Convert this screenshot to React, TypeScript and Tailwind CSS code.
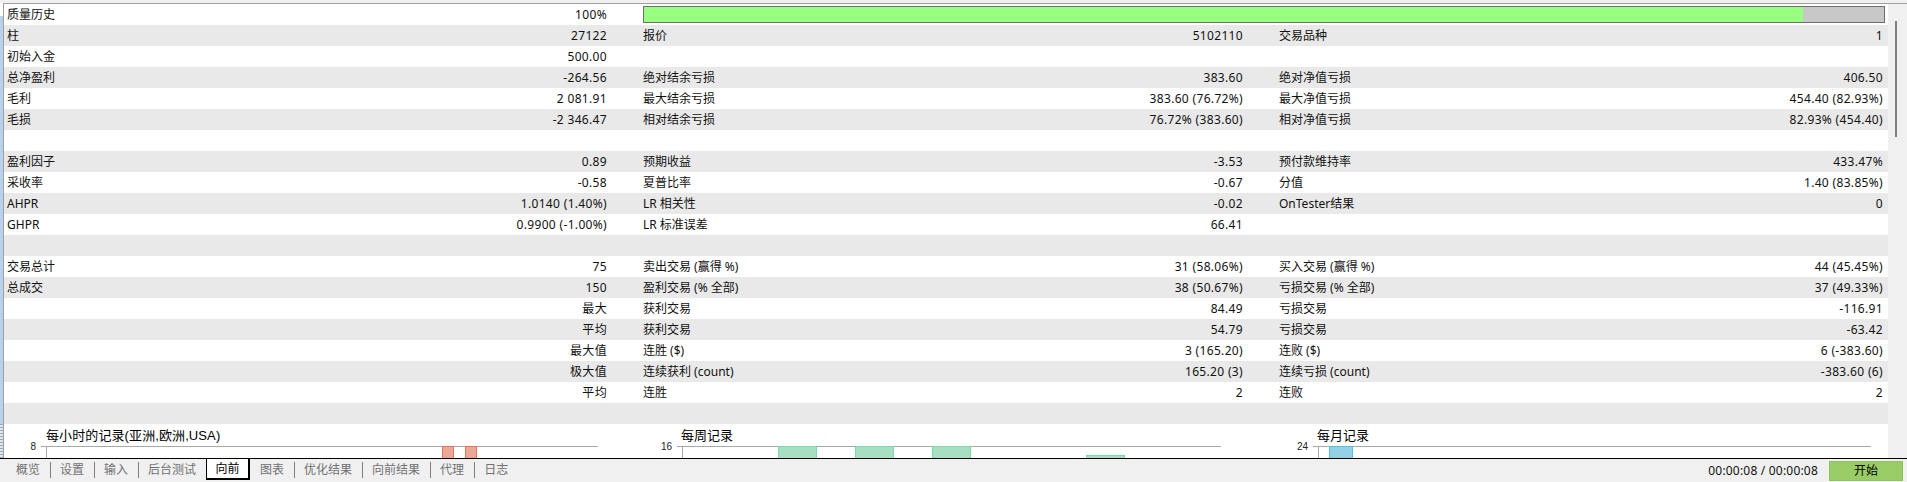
const font = "[font-family:'Noto_Sans','Noto_Sans_CJK_SC',sans-serif]";

type Row = { a?: string; av?: string; b?: string; bv?: string; c?: string; cv?: string; bar?: boolean };

const rows: Row[] = [
  { a: '质量历史', av: '100%', bar: true },
  { a: '柱', av: '27122', b: '报价', bv: '5102110', c: '交易品种', cv: '1' },
  { a: '初始入金', av: '500.00' },
  { a: '总净盈利', av: '-264.56', b: '绝对结余亏损', bv: '383.60', c: '绝对净值亏损', cv: '406.50' },
  { a: '毛利', av: '2 081.91', b: '最大结余亏损', bv: '383.60 (76.72%)', c: '最大净值亏损', cv: '454.40 (82.93%)' },
  { a: '毛损', av: '-2 346.47', b: '相对结余亏损', bv: '76.72% (383.60)', c: '相对净值亏损', cv: '82.93% (454.40)' },
  {},
  { a: '盈利因子', av: '0.89', b: '预期收益', bv: '-3.53', c: '预付款维持率', cv: '433.47%' },
  { a: '采收率', av: '-0.58', b: '夏普比率', bv: '-0.67', c: '分值', cv: '1.40 (83.85%)' },
  { a: 'AHPR', av: '1.0140 (1.40%)', b: 'LR 相关性', bv: '-0.02', c: 'OnTester结果', cv: '0' },
  { a: 'GHPR', av: '0.9900 (-1.00%)', b: 'LR 标准误差', bv: '66.41' },
  {},
  { a: '交易总计', av: '75', b: '卖出交易 (赢得 %)', bv: '31 (58.06%)', c: '买入交易 (赢得 %)', cv: '44 (45.45%)' },
  { a: '总成交', av: '150', b: '盈利交易 (% 全部)', bv: '38 (50.67%)', c: '亏损交易 (% 全部)', cv: '37 (49.33%)' },
  { av: '最大', b: '获利交易', bv: '84.49', c: '亏损交易', cv: '-116.91' },
  { av: '平均', b: '获利交易', bv: '54.79', c: '亏损交易', cv: '-63.42' },
  { av: '最大值', b: '连胜 ($)', bv: '3 (165.20)', c: '连败 ($)', cv: '6 (-383.60)' },
  { av: '极大值', b: '连续获利 (count)', bv: '165.20 (3)', c: '连续亏损 (count)', cv: '-383.60 (6)' },
  { av: '平均', b: '连胜', bv: '2', c: '连败', cv: '2' },
  {},
];

function Cell({ label, value, className }: { label?: string; value?: string; className: string }) {
  return (
    <div className={`flex items-center justify-between ${className}`}>
      <span>{label}</span>
      <span className="tracking-[0.33px]">{value}</span>
    </div>
  );
}

function ReportRow({ row, index }: { row: Row; index: number }) {
  return (
    <div className={`flex h-[21px] shrink-0 ${index % 2 === 1 ? 'bg-[#e9e9e9]' : 'bg-white'}`}>
      <Cell label={row.a} value={row.av} className="w-[639px] pl-[3px] pr-[36px]" />
      {row.bar ? (
        <div className="flex-1 pr-[3px] pt-[2px]">
          <div className="h-[17px] border border-[#6e6e6e] bg-[#c8c8c8]">
            <div className="h-full w-[93.45%] bg-[#99ff80]" />
          </div>
        </div>
      ) : (
        <>
          <Cell label={row.b} value={row.bv} className="w-[636px] pr-[36px]" />
          <Cell label={row.c} value={row.cv} className="w-[609px] pr-[5px]" />
        </>
      )}
    </div>
  );
}

function Charts() {
  const title = "'Liberation Sans','Noto Sans CJK SC',sans-serif";
  return (
    <svg width="1884" height="34" className="block shrink-0 bg-white">
      <g transform="translate(-4 -424)">
        <text x="46" y="440" fontSize="13" letterSpacing="0.1" fontFamily={title} fill="#000">每小时的记录(亚洲,欧洲,USA)</text>
        <text x="681" y="440" fontSize="13" fontFamily={title} fill="#000">每周记录</text>
        <text x="1317" y="440" fontSize="13" fontFamily={title} fill="#000">每月记录</text>

        <text x="36" y="450" fontSize="10" textAnchor="end" fontFamily={title} fill="#222">8</text>
        <text x="672" y="450" fontSize="10" textAnchor="end" fontFamily={title} fill="#222">16</text>
        <text x="1308" y="450" fontSize="10" textAnchor="end" fontFamily={title} fill="#222">24</text>

        <g stroke="#a8a8a8" fill="none">
          <path d="M41 446.5H598M46.5 446V458" />
          <path d="M677 446.5H1221M682.5 446V458" />
          <path d="M1313 446.5H1871M1318.5 446V458" />
        </g>

        <g fill="#e9a898" stroke="#e8745a">
          <rect x="442.5" y="446.5" width="11" height="14" />
          <rect x="465.5" y="446.5" width="11" height="14" />
        </g>
        <g fill="#a8dfc2" stroke="#7ed8a8">
          <rect x="778.5" y="446.5" width="38" height="14" />
          <rect x="855.5" y="446.5" width="38" height="14" />
          <rect x="932.5" y="446.5" width="38" height="14" />
          <rect x="1086.5" y="455.5" width="38" height="6" />
        </g>
        <g fill="#92d2e4" stroke="#5cbcdc">
          <rect x="1329.5" y="446.5" width="23" height="14" />
        </g>
      </g>
    </svg>
  );
}

const tabsBefore = ['概览', '设置', '输入', '后台测试'];
const tabsAfter = ['图表', '优化结果', '向前结果', '代理', '日志'];

function Tab({ label, last }: { label: string; last?: boolean }) {
  return (
    <div className="flex h-full items-center">
      <span className="pl-[9px] pr-[10px] text-[#707070]">{label}</span>
      {!last ? <span className="h-[16px] w-px bg-[#808080]" /> : null}
    </div>
  );
}

export default function App() {
  return (
    <div className={`flex h-[482px] w-[1907px] flex-col overflow-hidden bg-[#f0f0f0] text-[12px] leading-none text-[#111] ${font}`}>
      <div className="flex min-h-0 flex-1 pt-[3px]">
        {/* left window edge */}
        <div className="flex w-[3px] shrink-0 flex-col">
          <div className="h-[13px] bg-white" />
          <div className="flex-1 bg-[#b9d1ea]" />
          <div className="h-[34px] bg-[repeating-linear-gradient(0deg,#9aa5b5_0,#9aa5b5_1px,#e0e6ee_1px,#e0e6ee_3px)]" />
        </div>
        <div className="flex min-w-0 flex-1 flex-col border-l border-t border-[#a0a0a0]">
          <div className="flex min-h-0 flex-1">
            <div className="flex w-[1884px] shrink-0 flex-col">
              {rows.map((row, i) => (
                <ReportRow key={i} row={row} index={i} />
              ))}
              <Charts />
            </div>
            {/* scrollbar */}
            <div className="flex-1 pl-[7px] pt-[17px]">
              <div className="h-[116px] w-[2px] bg-[#808080]" />
            </div>
          </div>
        </div>
      </div>
      <div className="flex h-[24px] shrink-0 items-start border-t border-black">
        <div className="flex h-[21px] items-center pl-[7px]">
          {tabsBefore.map((t, i) => (
            <Tab key={t} label={t} last={i === tabsBefore.length - 1} />
          ))}
          <div className="mr-px flex h-full w-[44px] items-center justify-center border-b-2 border-l border-r-2 border-black bg-white text-black">向前</div>
          {tabsAfter.map((t, i) => (
            <Tab key={t} label={t} last={i === tabsAfter.length - 1} />
          ))}
        </div>
        <div className="ml-auto flex h-[21px] items-center gap-[11px] pr-[4px] pt-[2px]">
          <span className="tracking-[0.2px]">00:00:08 / 00:00:08</span>
          <div className="flex h-[20px] w-[74px] items-center justify-center border border-[#8cc45a] bg-[#99cc66] text-black">开始</div>
        </div>
      </div>
    </div>
  );
}
